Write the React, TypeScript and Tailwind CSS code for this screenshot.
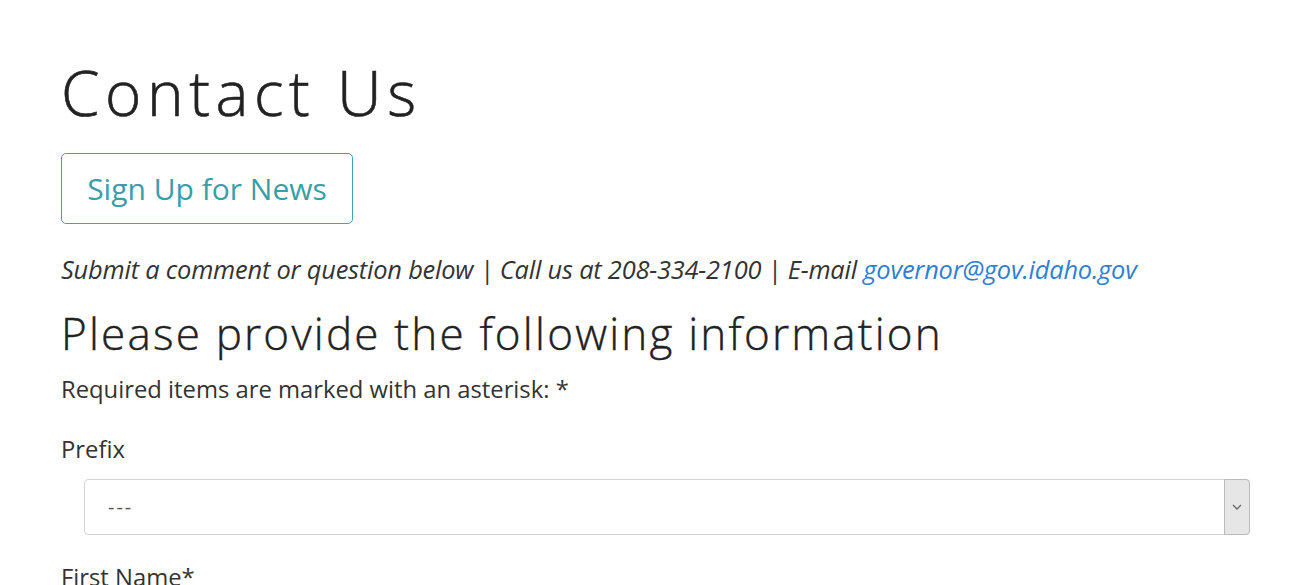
export default function App() {
  return (
    <div className="min-h-[585px] bg-white px-[61px] pt-[52px] text-[#333]" style={{ fontFamily: '"Open Sans", "Noto Sans", sans-serif' }}>
      <h1 className="text-[62px] leading-[80px] tracking-[5.6px] text-[#222]" style={{ fontFamily: '"Open Sans", sans-serif', fontWeight: 300, WebkitTextStroke: "0.6px #222" }}>
        Contact Us
      </h1>
      <button className="mt-[21px] h-[71px] w-[292px] rounded-[5px] border border-[#3fa3b1] text-[30px] text-[#3a9dab]">
        Sign Up for News
      </button>
      <p className="mt-[28px] text-[25.4px] italic leading-[34px] tracking-[-0.2px]">
        Submit a comment or question below | Call us at 208-334-2100 | E-mail{" "}
        <a href="#" className="text-[#2f7fd4]">governor@gov.idaho.gov</a>
      </p>
      <h2 className="mt-[18px] text-[44px] leading-[58px] tracking-[2.2px] text-[#222]" style={{ fontFamily: '"Open Sans", sans-serif', fontWeight: 300, WebkitTextStroke: "0.4px #222" }}>
        Please provide the following information
      </h2>
      <p className="mt-[12px] text-[23.8px] leading-[30px]">Required items are marked with an asterisk: *</p>
      <label className="mt-[30px] block text-[23.8px] leading-[30px]">Prefix</label>
      <div className="ml-[23px] mt-[15px] flex h-[56px] w-[1166px] items-stretch rounded-[4px] border border-[#d4d4d4]">
        <div className="flex flex-1 items-center pl-[23px] text-[20px] tracking-[2px] text-[#555]">---</div>
        <div className="m-[-1px] flex w-[26px] items-center justify-center rounded-r-[4px] border border-[#bbb] bg-[#e6e6e6]">
          <svg width="10" height="6" viewBox="0 0 10 6" fill="none" stroke="#666" strokeWidth="1.3">
            <path d="M1 1l4 4 4-4" />
          </svg>
        </div>
      </div>
      <label className="mt-[27px] block text-[23.8px] leading-[30px]">First Name*</label>
    </div>
  );
}
